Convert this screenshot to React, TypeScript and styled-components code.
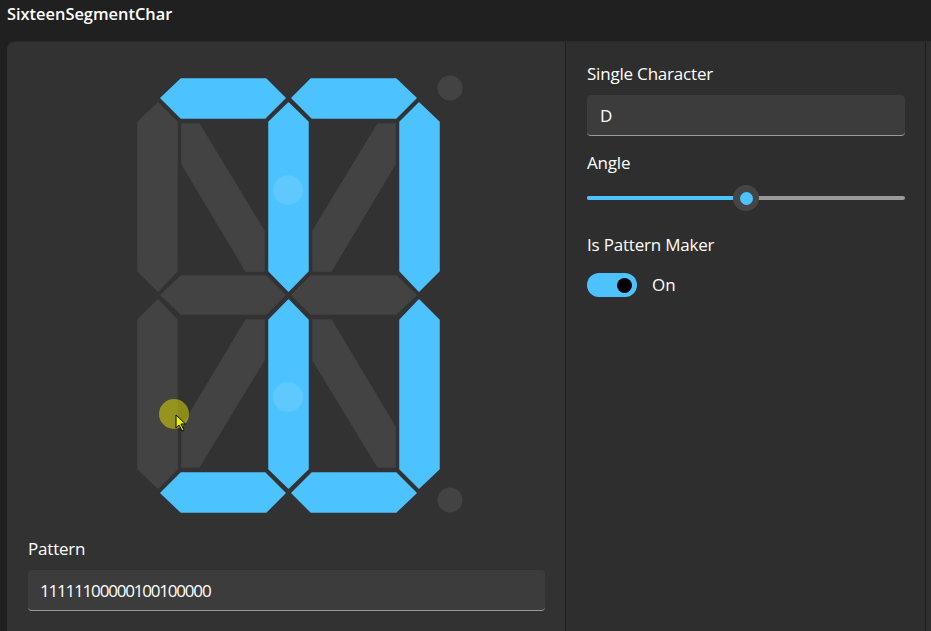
import React from "react";
import styled, { createGlobalStyle } from "styled-components";

const GlobalStyle = createGlobalStyle`
  html, body { margin: 0; padding: 0; background: #202020; }
  body { font-family: "Segoe UI", "Open Sans", "Noto Sans", sans-serif; color: #ffffff; }
  * { box-sizing: border-box; }
`;

const Window = styled.div`
  width: 931px;
  height: 631px;
  display: flex;
  flex-direction: column;
  overflow: hidden;
  background: #202020;
`;

const TitleBar = styled.div`
  height: 41px;
  flex: 0 0 41px;
  display: flex;
  align-items: flex-start;
  padding: 3px 0 0 7px;
  font-size: 16.4px;
  font-weight: 600;
  line-height: 22px;
`;

const Card = styled.div`
  flex: 1;
  margin-left: 7px;
  display: flex;
  border-top-left-radius: 8px;
  overflow: hidden;
  border-top: 1px solid #2a2a2a;
`;

const LeftPanel = styled.div`
  width: 559px;
  flex: 0 0 559px;
  background: #323232;
  display: flex;
  flex-direction: column;
  padding: 19px 20px 0 21px;
  border-right: 1px solid #1f1f1f;
`;

const RightPanel = styled.div`
  width: 360px;
  flex: 0 0 360px;
  background: #2e2e2e;
  display: flex;
  flex-direction: column;
  padding: 21px 20px 0 21px;
  border-right: 1px solid #1e1e1e;
`;

const EdgeStrip = styled.div`
  flex: 1;
  background: #2f2f2f;
`;

const Display = styled.svg`
  align-self: center;
  display: block;
  width: 360px;
  height: 460px;
  flex: 0 0 460px;
`;

const Label = styled.div<{ $mt?: number }>`
  font-size: 17px;
  line-height: 22px;
  letter-spacing: -0.2px;
  color: #ffffff;
  margin-top: ${(p) => p.$mt ?? 0}px;
`;

const TextBox = styled.div<{ $mono?: boolean }>`
  height: 41px;
  flex: 0 0 41px;
  margin-top: 10px;
  background: #3c3c3c;
  border-radius: 4px;
  border-bottom: 1px solid #9a9a9a;
  display: flex;
  align-items: center;
  padding: 0 13px 0 ${(p) => (p.$mono ? 12 : 13)}px;
  font-size: ${(p) => (p.$mono ? 17 : 17)}px;
  letter-spacing: ${(p) => (p.$mono ? "-1.2px" : "0")};
  color: #ffffff;
`;

const SliderWrap = styled.div`
  position: relative;
  height: 32px;
  margin-top: 8px;
  display: flex;
  align-items: center;
`;

const Track = styled.div`
  width: 100%;
  height: 4px;
  border-radius: 2px;
  background: #9a9a9a;
  overflow: hidden;
`;

const TrackFill = styled.div`
  height: 100%;
  background: #4cc2ff;
`;

const Thumb = styled.div`
  position: absolute;
  top: 50%;
  width: 26px;
  height: 26px;
  margin: -13px 0 0 -13px;
  border-radius: 50%;
  background: #454545;
  display: flex;
  align-items: center;
  justify-content: center;
  &::after {
    content: "";
    width: 13px;
    height: 13px;
    border-radius: 50%;
    background: #4cc2ff;
  }
`;

const ToggleRow = styled.div`
  display: flex;
  align-items: center;
  margin-top: 17px;
  gap: 15px;
  font-size: 17px;
  line-height: 24px;
`;

const ToggleTrack = styled.div<{ $on: boolean }>`
  width: 50px;
  height: 24px;
  border-radius: 12px;
  background: ${(p) => (p.$on ? "#4cc2ff" : "transparent")};
  display: flex;
  align-items: center;
  justify-content: ${(p) => (p.$on ? "flex-end" : "flex-start")};
  padding: 0 5px;
`;

const ToggleKnob = styled.div`
  width: 15px;
  height: 15px;
  border-radius: 50%;
  background: #000000;
`;

type Pt = [number, number];
const mx = (pts: Pt[]): Pt[] => pts.map(([x, y]) => [575 - x, y]);
const my = (pts: Pt[]): Pt[] => pts.map(([x, y]) => [x, 589 - y]);
const toStr = (pts: Pt[]) => pts.map((p) => p.join(",")).join(" ");

const A1: Pt[] = [[160, 97], [180, 78], [265, 78], [284, 97], [264, 117], [180, 117]];
const G1: Pt[] = [[160, 294], [180, 275], [265, 275], [284, 294], [265, 313], [180, 313]];
const F: Pt[] = [[137, 121], [157, 102], [176, 121], [176, 270], [157, 290], [137, 270]];
const I: Pt[] = [[268, 121], [287.5, 102], [307, 121], [307, 270], [287.5, 290], [268, 270]];
const H: Pt[] = [[181, 123], [198, 123], [263, 230], [263, 270], [245, 270], [181, 163]];

const segments: { pts: Pt[]; on: boolean }[] = [
  { pts: A1, on: true },
  { pts: mx(A1), on: true },
  { pts: F, on: false },
  { pts: H, on: false },
  { pts: I, on: true },
  { pts: mx(H), on: false },
  { pts: mx(F), on: true },
  { pts: G1, on: false },
  { pts: mx(G1), on: false },
  { pts: my(F), on: false },
  { pts: my(H), on: false },
  { pts: my(I), on: true },
  { pts: my(mx(H)), on: false },
  { pts: my(mx(F)), on: true },
  { pts: my(A1), on: true },
  { pts: my(mx(A1)), on: true },
];

const ON = "#4cc2ff";
const OFF = "#434343";

function SegmentDisplay() {
  return (
    <Display viewBox="106 60 360 460">
      {segments.map((s, i) => (
        <polygon
          key={i}
          points={toStr(s.pts)}
          fill={s.on ? ON : OFF}
          stroke={s.on ? ON : OFF}
          strokeWidth={1.5}
          strokeLinejoin="round"
        />
      ))}
      <circle cx={449} cy={87} r={12.5} fill={OFF} />
      <circle cx={449} cy={499} r={12.5} fill={OFF} />
      <circle cx={287} cy={189} r={15} fill="rgba(255,255,255,0.1)" />
      <circle cx={287} cy={396} r={15} fill="rgba(255,255,255,0.1)" />
      <circle cx={173} cy={413} r={15} fill="rgba(215,215,0,0.55)" />
      <path
        d="M175 414 L175 427 L178 424 L181 430 L183 429 L180 423 L184.5 423 Z"
        fill="#e4f200"
        stroke="#000"
        strokeWidth={1}
        strokeLinejoin="round"
      />
    </Display>
  );
}

export default function App() {
  const angle = 0.5;
  return (
    <>
      <GlobalStyle />
      <Window>
        <TitleBar>SixteenSegmentChar</TitleBar>
        <Card>
          <LeftPanel>
            <SegmentDisplay />
            <Label $mt={17}>Pattern</Label>
            <TextBox $mono>11111100000100100000</TextBox>
          </LeftPanel>
          <RightPanel>
            <Label>Single Character</Label>
            <TextBox>D</TextBox>
            <Label $mt={16}>Angle</Label>
            <SliderWrap>
              <Track>
                <TrackFill style={{ width: `${angle * 100}%` }} />
              </Track>
              <Thumb style={{ left: `${angle * 100}%` }} />
            </SliderWrap>
            <Label $mt={20}>Is Pattern Maker</Label>
            <ToggleRow>
              <ToggleTrack $on>
                <ToggleKnob />
              </ToggleTrack>
              On
            </ToggleRow>
          </RightPanel>
          <EdgeStrip />
        </Card>
      </Window>
    </>
  );
}
